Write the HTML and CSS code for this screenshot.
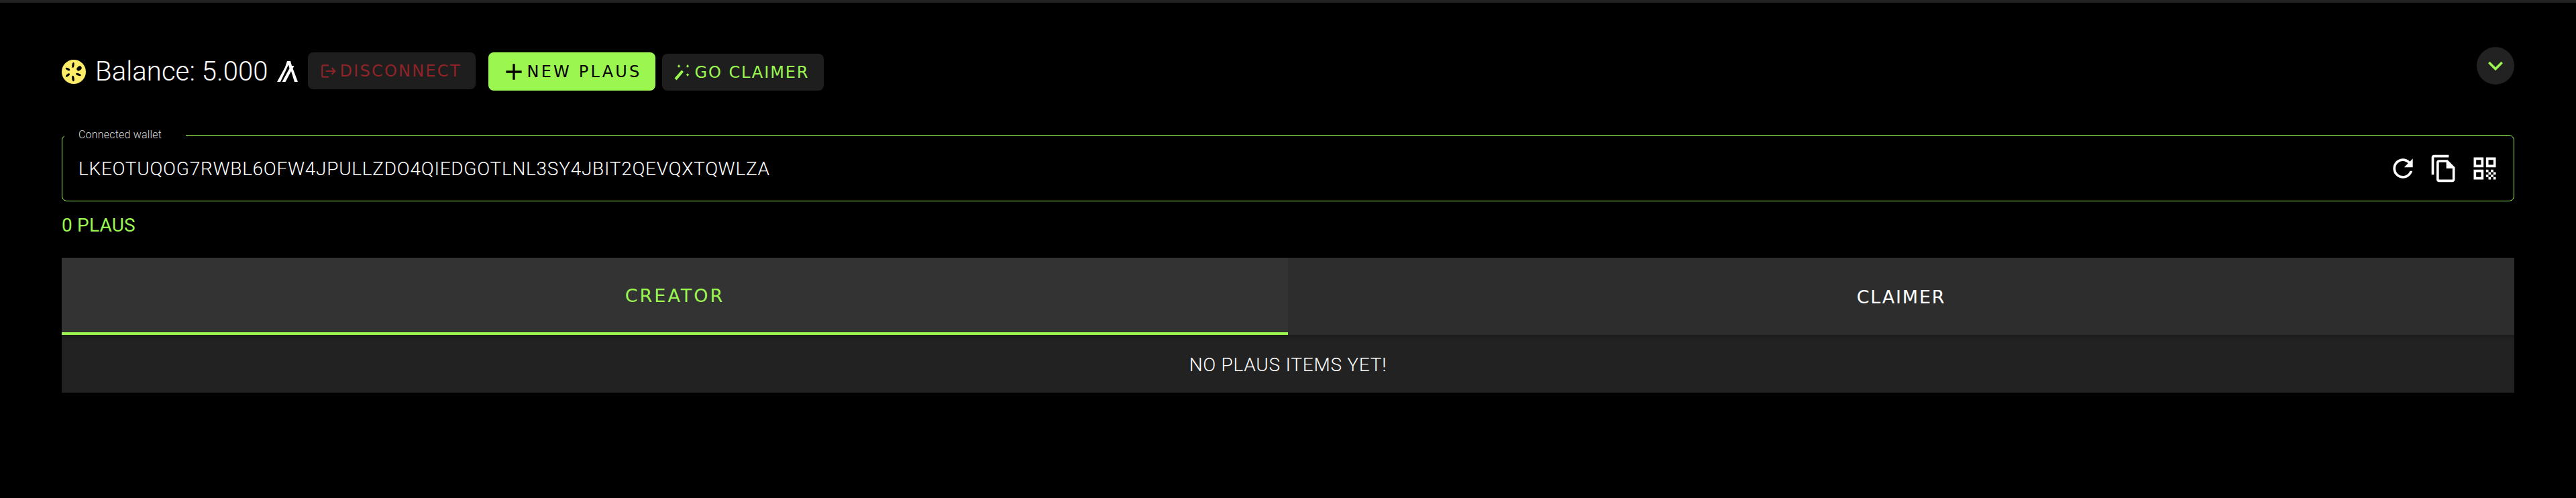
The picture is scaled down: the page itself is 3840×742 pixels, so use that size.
FILE: index.html
```html
<!DOCTYPE html>
<html lang="en">
<head>
<meta charset="UTF-8">
<meta name="viewport" content="width=device-width, initial-scale=1.0">
<title>Plaus</title>
<link rel="stylesheet" href="styles.css">
</head>
<body>
<div class="topbar"></div>
<div class="container">
  <div class="header">
    <div class="balance">
      <svg class="coin" viewBox="0 0 36 36">
        <circle cx="18" cy="18" r="18" fill="#fdec68"/>
        <ellipse cx="17" cy="8" rx="1.6" ry="4" fill="#000" transform="rotate(8 17 8)"/>
        <ellipse cx="26" cy="13" rx="3" ry="4" fill="#000" transform="rotate(50 26 13)"/>
        <ellipse cx="25" cy="22" rx="1.7" ry="4" fill="#000" transform="rotate(-70 25 22)"/>
        <ellipse cx="17" cy="28" rx="1.7" ry="4.2" fill="#000" transform="rotate(-8 17 28)"/>
        <ellipse cx="9" cy="23" rx="1.6" ry="3.6" fill="#000" transform="rotate(52 9 23)"/>
        <ellipse cx="9" cy="14" rx="1.6" ry="3.6" fill="#000" transform="rotate(-62 9 14)"/>
      </svg>
      <span class="balance-text">Balance: 5.000</span>
      <svg class="algo" viewBox="0 0 31 31"><path fill="#fff" d="M0 31 L12 9 L15 0 L20 0 L22 7 L25.500 7 L23.500 11 L31 31 L26 31 L21 15 L12.500 31 L7.500 31 L18.500 11 L17 5.500 L5 31 Z"/></svg>
    </div>
    <button class="btn btn-red">
      <svg class="icon-logout" viewBox="0 0 24 24"><path fill="currentColor" d="M17 7l-1.41 1.41L18.17 11H8v2h10.170l-2.580 2.580L17 17l5-5zM4 5h8V3H4c-1.100 0-2 .9-2 2v14c0 1.100.9 2 2 2h8v-2H4V5z"/></svg>
      DISCONNECT
    </button>
    <button class="btn btn-new">
      <svg class="icon-plus" viewBox="0 0 24 24"><path fill="currentColor" d="M19 13h-6v6h-2v-6H5v-2h6V5h2v6h6v2z"/></svg>
      NEW PLAUS
    </button>
    <button class="btn btn-claimer">
      <svg class="icon-wand" viewBox="0 0 24 24">
        <path fill="currentColor" d="M0.500 20.500 L11 8.500 L14 11 L3.500 23.500 Z"/>
        <path fill="currentColor" d="M7 0 L8 1.500 L9.500 2.500 L8 3.500 L7 5 L6 3.500 L4.500 2.500 L6 1.500 Z"/>
        <path fill="currentColor" d="M20 0 L21 1.500 L22.500 2.500 L21 3.500 L20 5 L19 3.500 L17.500 2.500 L19 1.500 Z"/>
        <path fill="currentColor" d="M20 13 L21 14.500 L22.500 15.500 L21 16.500 L20 18 L19 16.500 L17.500 15.500 L19 14.500 Z"/>
      </svg>
      GO CLAIMER
    </button>
    <button class="collapse">
      <svg viewBox="0 0 24 24"><path fill="currentColor" d="M16.590 8.590L12 13.170 7.410 8.590 6 10l6 6 6-6z"/></svg>
    </button>
  </div>

  <fieldset class="wallet">
    <legend>Connected wallet</legend>
    <div class="wallet-row">
      <span class="wallet-address">LKEOTUQOG7RWBL6OFW4JPULLZDO4QIEDGOTLNL3SY4JBIT2QEVQXTQWLZA</span>
      <div class="wallet-actions">
        <svg viewBox="0 0 24 24"><path fill="currentColor" d="M17.650 6.350C16.200 4.900 14.210 4 12 4c-4.420 0-7.990 3.580-7.990 8s3.570 8 7.990 8c3.730 0 6.840-2.550 7.730-6h-2.080c-.82 2.330-3.040 4-5.650 4-3.310 0-6-2.690-6-6s2.690-6 6-6c1.660 0 3.140.69 4.220 1.780L13 11h7V4l-2.350 2.350z"/></svg>
        <svg viewBox="0 0 24 24"><path fill="currentColor" d="M16 1H4c-1.100 0-2 .9-2 2v14h2V3h12V1zm-1 4H8c-1.100 0-1.990.9-1.990 2L6 21c0 1.100.89 2 1.990 2H19c1.100 0 2-.9 2-2V11l-6-6zM8 21V7h6v5h5v9H8z"/></svg>
        <svg viewBox="0 0 24 24"><path fill="currentColor" d="M3 11h8V3H3v8zm2-6h4v4H5V5zM3 21h8v-8H3v8zm2-6h4v4H5v-4zM13 3v8h8V3h-8zm6 6h-4V5h4v4zM13 13h2v2h-2zM15 15h2v2h-2zM13 17h2v2h-2zM15 19h2v2h-2zM17 17h2v2h-2zM17 13h2v2h-2zM19 15h2v2h-2zM19 19h2v2h-2z"/></svg>
      </div>
    </div>
  </fieldset>

  <div class="count">0 PLAUS</div>

  <div class="tabs">
    <div class="tab tab-creator active">CREATOR</div>
    <div class="tab tab-claimer">CLAIMER</div>
  </div>
  <div class="empty">NO PLAUS ITEMS YET!</div>
</div>
</body>
</html>
```

FILE: styles.css
```css
*{margin:0;padding:0;box-sizing:border-box;}
body{background:#000;color:#fff;font-family:"Roboto",sans-serif;font-weight:300;}
.topbar{height:4px;background:#222;}
.container{padding:0 92px;}

.header{display:flex;align-items:flex-start;height:183px;padding-top:66px;}
.balance{display:flex;align-items:center;height:57px;margin-top:8px;margin-right:15px;}
.coin{width:36px;height:36px;margin-right:14px;}
.balance-text{font-size:40px;line-height:57px;letter-spacing:.1px;}
.algo{width:31px;height:31px;margin-left:13px;}

.btn{display:flex;align-items:center;border:none;border-radius:8px;font-family:"DejaVu Sans",sans-serif;font-weight:400;font-size:24px;white-space:nowrap;background:#1e1e1e;}
.btn-red{width:250px;height:55px;margin-top:8px;padding-left:18px;color:#8f2327;letter-spacing:2.2px;}
.btn-new{width:249px;height:57px;margin:8px 0 0 19px;padding-left:18px;background:#9bf750;color:#000;letter-spacing:3.2px;}
.btn-claimer{width:241px;height:55px;margin:10px 0 0 10px;padding-left:18px;color:#9bf750;letter-spacing:1.9px;}
.icon-logout{width:26px;height:26px;margin-right:4px;}
.icon-plus{width:40px;height:40px;margin-right:0;}
.icon-wand{width:24px;height:24px;margin-right:7px;}
.collapse{width:56px;height:56px;margin-left:auto;display:flex;align-items:center;justify-content:center;border:none;border-radius:50%;background:#222;color:#9bf750;}
.collapse svg{width:44px;height:44px;}

.wallet{height:113px;border:1px solid #9bf750;border-radius:8px;}
.wallet legend{margin-left:3px;padding:0 36px 0 21px;font-size:16px;line-height:28px;letter-spacing:.2px;color:#ddd;}
.wallet-row{display:flex;align-items:center;justify-content:space-between;height:72px;padding:0 22px 0 24px;}
.wallet-address{font-size:28px;letter-spacing:.72px;}
.wallet-actions{display:flex;gap:17px;margin-right:-1px;}
.wallet-actions svg{width:44px;height:44px;display:block;}

.count{margin-top:16px;margin-bottom:28px;font-size:28px;font-weight:400;line-height:40px;letter-spacing:.2px;color:#9bf750;}

.tabs{display:flex;height:115px;background:#2d2d2d;}
.tab{flex:1;display:flex;align-items:center;justify-content:center;padding-top:2px;font-family:"DejaVu Sans",sans-serif;font-size:27px;font-weight:400;}
.tab-creator{letter-spacing:3px;}
.tab-claimer{letter-spacing:1.8px;}
.tab.active{background:#333;color:#9bf750;border-bottom:4px solid #9bf750;}
.empty{height:86px;display:flex;align-items:center;justify-content:center;padding-top:2px;background:#222;font-size:28px;letter-spacing:.75px;box-shadow:inset 0 6px 6px -4px rgba(0,0,0,.3);}
```
